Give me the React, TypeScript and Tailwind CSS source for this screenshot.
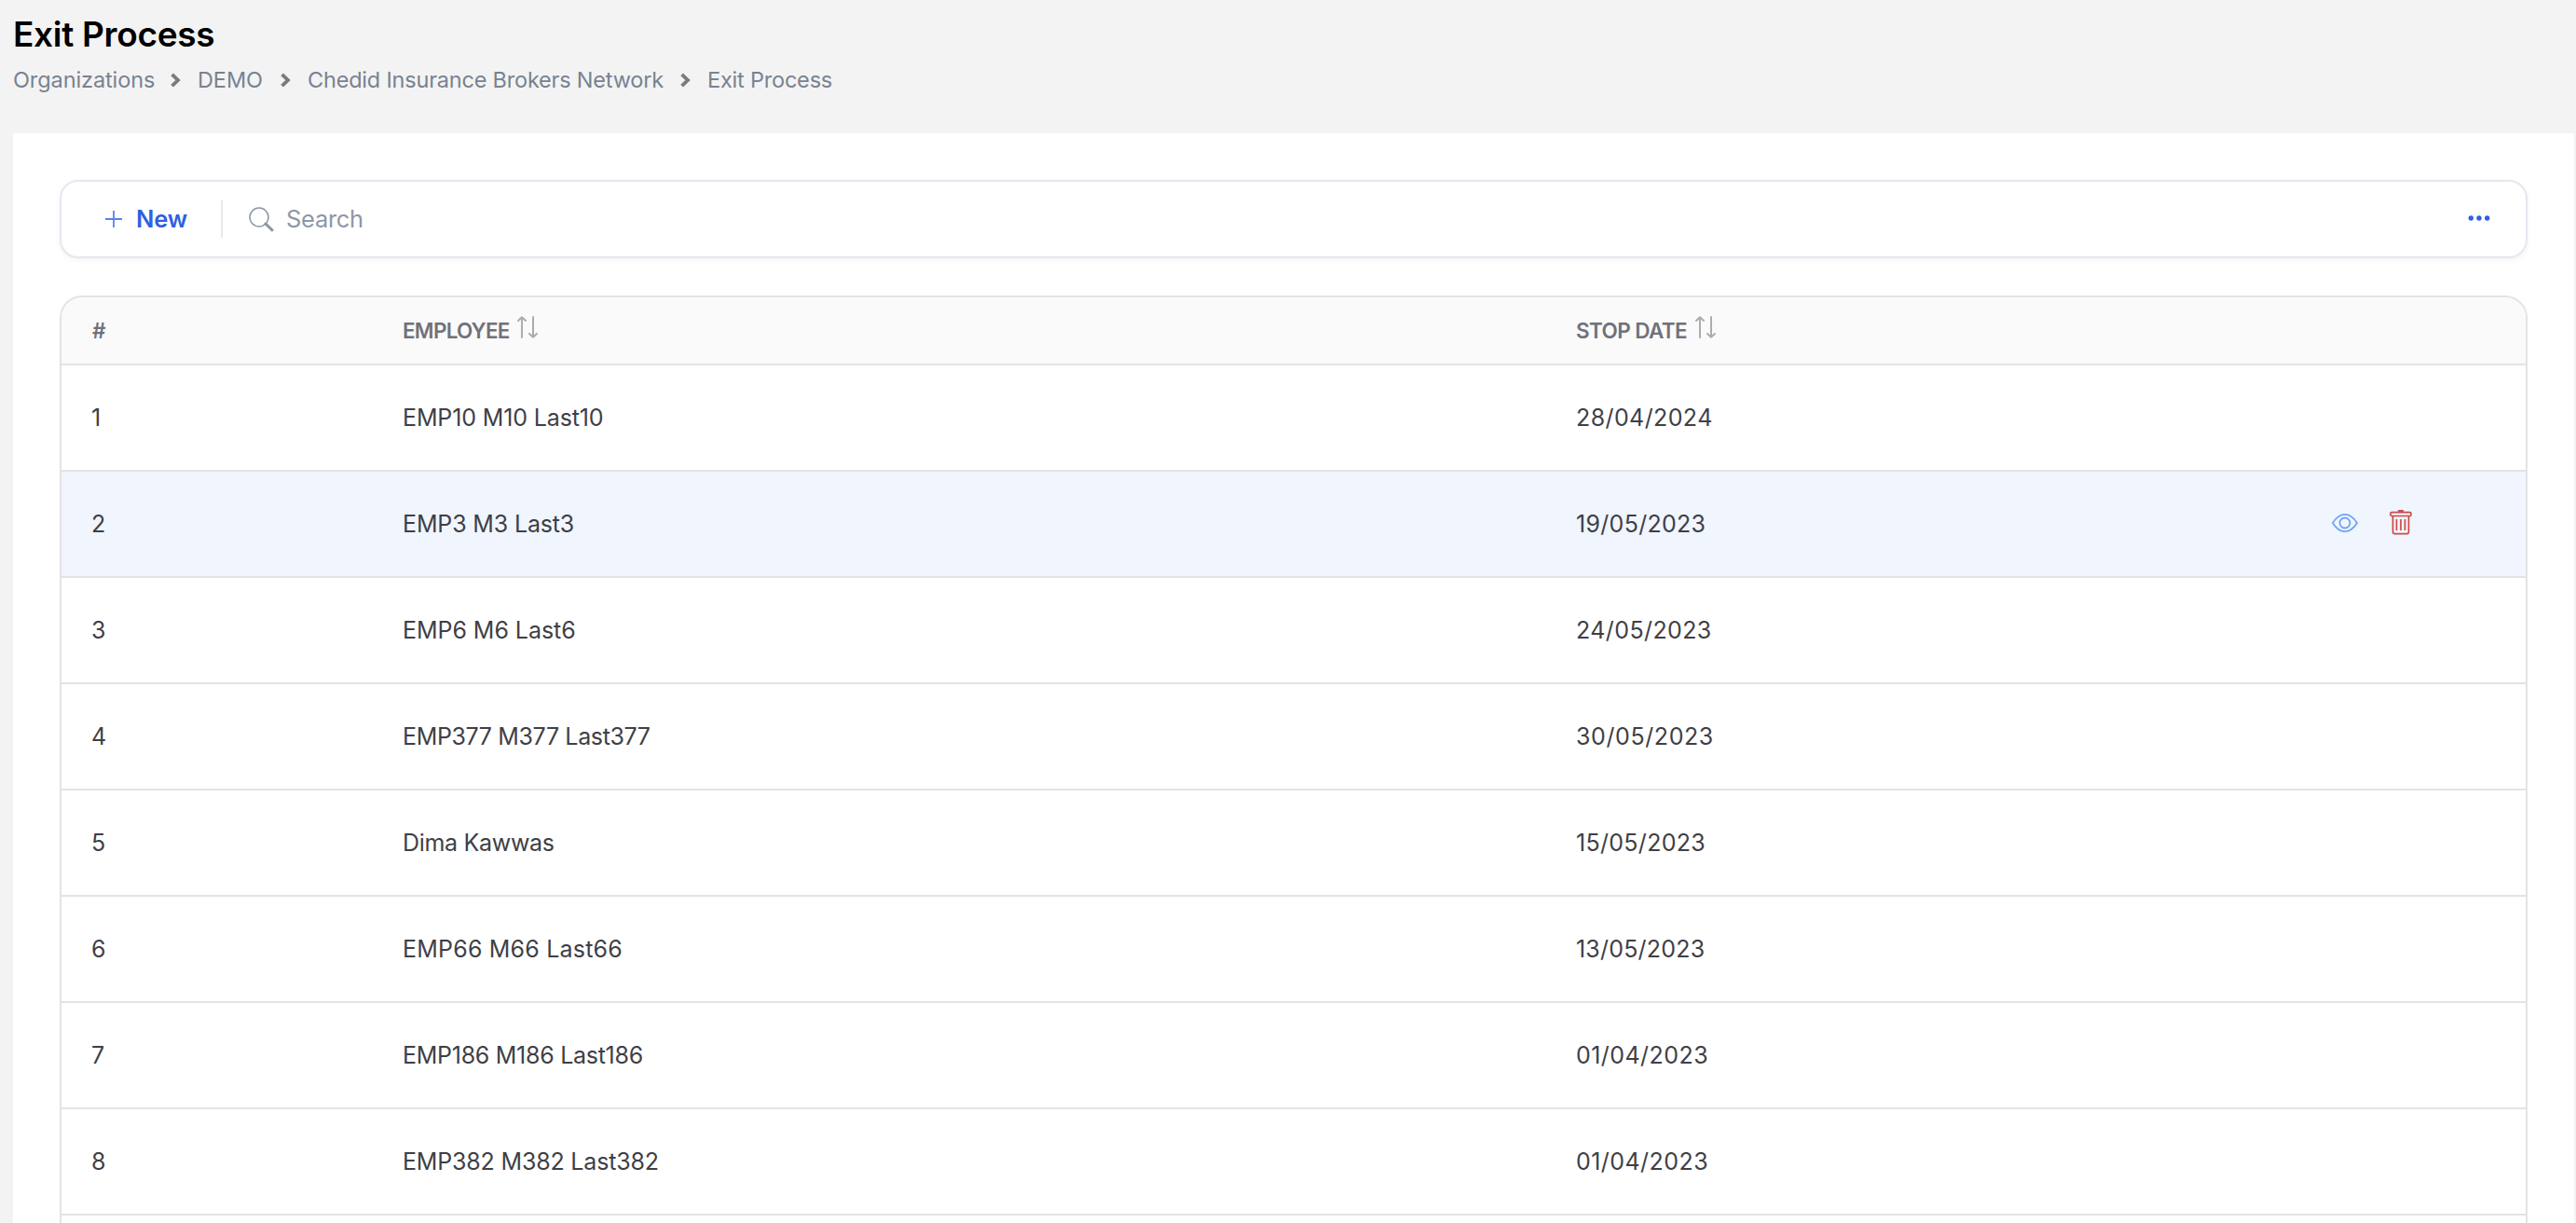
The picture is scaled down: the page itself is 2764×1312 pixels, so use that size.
import clsx from 'clsx';

const breadcrumbs = [
  { label: 'Organizations', className: 'w-[169px] tracking-[-0.1px]' },
  { label: 'DEMO', className: 'w-[89px] tracking-[-0.1px]' },
  { label: 'Chedid Insurance Brokers Network', className: 'w-[400px] tracking-[-0.2px]' },
  { label: 'Exit Process', className: 'tracking-[-0.2px]' },
];

const rows = [
  { id: 1, employee: 'EMP10 M10 Last10', date: '28/04/2024', nameClass: 'tracking-[-0.13px]', dateClass: 'tracking-[0.4px]' },
  { id: 2, employee: 'EMP3 M3 Last3', date: '19/05/2023', nameClass: 'tracking-[-0.15px]', dateClass: 'tracking-[0.3px]' },
  { id: 3, employee: 'EMP6 M6 Last6', date: '24/05/2023', nameClass: 'tracking-[-0.05px]', dateClass: 'tracking-[0.4px]' },
  { id: 4, employee: 'EMP377 M377 Last377', date: '30/05/2023', nameClass: 'tracking-[-0.36px]', dateClass: 'tracking-[0.6px]' },
  { id: 5, employee: 'Dima Kawwas', date: '15/05/2023', nameClass: 'tracking-[-0.3px]', dateClass: 'tracking-[0.3px]' },
  { id: 6, employee: 'EMP66 M66 Last66', date: '13/05/2023', nameClass: 'tracking-[0.2px]', dateClass: 'tracking-[0.2px]' },
  { id: 7, employee: 'EMP186 M186 Last186', date: '01/04/2023', nameClass: 'tracking-[-0.28px]', dateClass: 'tracking-[0.45px]' },
  { id: 8, employee: 'EMP382 M382 Last382', date: '01/04/2023', nameClass: 'tracking-[-0.18px]', dateClass: 'tracking-[0.45px]' },
  { id: 9, employee: '', date: '', nameClass: '', dateClass: '' },
];

const columns = 'grid grid-cols-[366px_1259px_806px_1fr] items-center';

function ChevronIcon() {
  return (
    <svg className="h-4 w-[11px] shrink-0" viewBox="0 0 11 16" fill="none" stroke="#7a7a7a" strokeWidth="3.8">
      <path d="M1.6 1.8 8 8l-6.4 6.2" />
    </svg>
  );
}

function PlusIcon() {
  return (
    <svg className="size-[18px]" viewBox="0 0 18 18" stroke="#5b82ea" strokeWidth="1.8">
      <path d="M9 0v18M0 9h18" />
    </svg>
  );
}

function SearchIcon() {
  return (
    <svg className="size-[27px]" viewBox="0 0 27 27" fill="none" stroke="#8d97a8">
      <circle cx="11" cy="11" r="10" strokeWidth="1.5" />
      <path d="m18 18 7 6.8" strokeWidth="3" strokeLinecap="round" />
    </svg>
  );
}

function MoreIcon() {
  return (
    <svg className="h-[6px] w-6" viewBox="0 0 24 6" fill="#2f5fe3">
      <circle cx="3.3" cy="3" r="2.7" />
      <circle cx="12" cy="3" r="2.7" />
      <circle cx="20.7" cy="3" r="2.7" />
    </svg>
  );
}

function SortIcon() {
  return (
    <svg className="h-6 w-[22px]" viewBox="0 0 22 24" fill="none" stroke="#acacaf" strokeWidth="2" strokeLinecap="round" strokeLinejoin="round">
      <path d="M5 23V1.3M1 5l4-3.8L9 5" />
      <path d="M17 1v21.7M13 19l4 3.8 4-3.8" />
    </svg>
  );
}

function EyeIcon() {
  return (
    <svg className="h-5 w-7" viewBox="0 0 28 20" fill="none" stroke="#70a4f8" strokeWidth="1.8" strokeLinejoin="round">
      <path d="M.9 10C4.5 4.4 9 .9 14 .9S23.5 4.4 27.1 10C23.5 15.6 19 19.1 14 19.1S4.5 15.6.9 10Z" />
      <circle cx="14" cy="10" r="5.5" />
    </svg>
  );
}

function TrashIcon() {
  return (
    <svg className="h-[27px] w-6" viewBox="0 0 24 27" fill="none" stroke="#cf4a4a" strokeWidth="1.7" strokeLinejoin="round">
      <path d="M9.2 1.7C9.5 1 10 .9 10.5.9h3c.5 0 1 .1 1.300.8" fill="#cf4a4a" />
      <rect x="1" y="2.600" width="22" height="3.900" rx="1.200" />
      <path d="M3.500 6.500v17c0 1.400.8 2.200 2.200 2.200h12.600c1.400 0 2.200-.8 2.200-2.200v-17" />
      <path d="M7.500 10v12M12 10v12M16.500 10v12" />
    </svg>
  );
}

function PageHeader() {
  return (
    <header className="h-[143px] pl-[14px] pt-[13px]">
      <h1 className="text-[37px] font-semibold leading-[48px] tracking-[-0.3px] text-black">Exit Process</h1>
      <nav className="mt-[9px] flex items-center whitespace-nowrap text-[23.5px] leading-[31px] text-[#778292]">
        {breadcrumbs.map((item, index) => (
          <div key={item.label} className="flex items-center">
            <span className={clsx('block', item.className)}>{item.label}</span>
            {index < breadcrumbs.length - 1 && (
              <span className="mr-[18px] flex">
                <ChevronIcon />
              </span>
            )}
          </div>
        ))}
      </nav>
    </header>
  );
}

function Toolbar() {
  return (
    <div className="flex h-[84px] items-center rounded-[20px] border-2 border-[#e5e8f0] bg-white pl-[47px] pr-[38px] text-[25.5px] shadow-[0_2px_6px_rgba(15,23,42,0.05)]">
      <button className="flex w-[124px] items-center gap-[15px] font-semibold tracking-[-0.1px] text-[#2f5fe3]">
        <PlusIcon />
        New
      </button>
      <div className="h-10 w-[2px] bg-[#e5e8f0]" />
      <div className="ml-7 flex items-center gap-[13px] tracking-[-0.3px] text-[#8d97a8]">
        <SearchIcon />
        <span>Search</span>
      </div>
      <button className="mb-[2px] ml-auto" aria-label="More actions">
        <MoreIcon />
      </button>
    </div>
  );
}

function EmployeeTable() {
  return (
    <div className="mt-10 overflow-hidden rounded-t-[24px] border-2 border-b-0 border-[#e3e3e4]">
      <div className={clsx(columns, 'h-[73px] border-b-2 border-[#e3e3e4] bg-[#fafafa] text-[22.5px] font-semibold text-[#71717a]')}>
        <span className="pl-[33px]">#</span>
        <span className="flex items-center">
          <span className="w-[123px] pt-px tracking-[-0.75px]">EMPLOYEE</span>
          <span className="mb-2">
            <SortIcon />
          </span>
        </span>
        <span className="flex items-center">
          <span className="w-[128px] pt-px tracking-[-0.6px]">STOP DATE</span>
          <span className="mb-2">
            <SortIcon />
          </span>
        </span>
      </div>
      {rows.map((row) => (
        <div
          key={row.id}
          className={clsx(columns, 'h-[114px] border-b-2 border-[#e3e3e4] pt-[2px] text-[25px] text-[#3f3f46]', row.id === 2 && 'bg-[#f0f5fe]')}
        >
          <span className="pl-8">{row.employee && row.id}</span>
          <span className={row.nameClass}>{row.employee}</span>
          <span className={row.dateClass}>{row.date}</span>
          {row.id === 2 && (
            <span className="flex items-center gap-[34px] pb-[4px] pl-[5px]">
              <EyeIcon />
              <span className="pb-[2px]">
                <TrashIcon />
              </span>
            </span>
          )}
        </div>
      ))}
    </div>
  );
}

export default function App() {
  return (
    <div className="h-[1312px] w-[2764px] overflow-hidden bg-[#f3f3f3] font-['Inter',sans-serif]">
      <PageHeader />
      <main className="ml-[14px] mr-[2px] h-[1169px] overflow-hidden bg-white px-[50px] pt-[50px]">
        <Toolbar />
        <EmployeeTable />
      </main>
    </div>
  );
}
